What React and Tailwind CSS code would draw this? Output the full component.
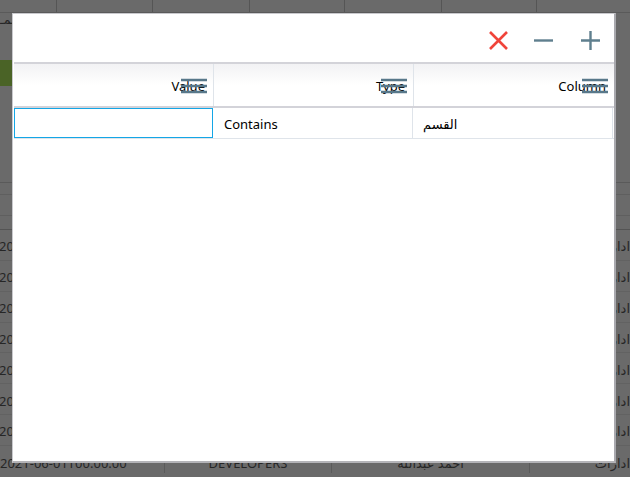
const bgRows = [0, 1, 2, 3, 4, 5, 6];

const MenuIcon = () => (
  <svg width="26" height="16" viewBox="0 0 26 16" className="absolute right-[6px] top-[14px]">
    <path d="M0 2h26M0 8h26M0 14h26" stroke="#58788a" strokeWidth="2.6" />
  </svg>
);

const HeaderCell = ({ label, last }) => (
  <div className={`relative flex h-full w-[200px] items-center justify-end pr-[8px] text-[13px] text-black ${last ? '' : 'border-r border-[#dfe4ea]'}`}>
    <span className="mt-[4px]">{label}</span>
    <MenuIcon />
  </div>
);

// dimmed data grid sitting behind the filter dialog
const BackdropGrid = () => (
  <div className="flex h-full flex-col text-[13px] text-[#262626]">
    <div className="flex h-[13px] border-b border-[#5a5a5a]">
      <div className="w-[57px] border-r border-[#555]" />
      <div className="w-[96px] border-r border-[#555]" />
      <div className="w-[97px] border-r border-[#555]" />
      <div className="w-[95px] border-r border-[#555]" />
      <div className="w-[97px] border-r border-[#555]" />
      <div className="w-[95px] border-r border-[#555]" />
    </div>
    <div className="h-[47px] leading-[12px]">لمـ</div>
    <div className="h-[26px] w-[40px] bg-[#4a6326]" />
    <div className="h-[98px] border-b border-[#5a5a5a]" />
    <div className="h-[12px] border-b border-[#5f5f5f]" />
    <div className="h-[21px] border-b border-[#5f5f5f]" />
    <div className="h-[14px] border-b border-[#545454]" />
    {bgRows.map((r) => (
      <div key={r} className="flex h-[31px] items-center justify-between border-b border-[#626262] pt-[4px]">
        <span className="-ml-[1px]">2021-06-01T00:00:00</span>
        <span>ادارات</span>
      </div>
    ))}
    <div className="flex h-[31px] items-center pt-[4px]">
      <span className="w-[165px] border-r border-[#5a5a5a]">2021-06-01T00:00:00</span>
      <span className="w-[167px] border-r border-[#5a5a5a] text-center">DEVELOPERS</span>
      <span className="w-[198px] border-r border-[#5a5a5a] text-center">احمد عبدالله</span>
      <span className="flex-1 text-right">ادارات</span>
    </div>
  </div>
);

export default function App() {
  return (
    <div className="relative h-[477px] w-[630px] overflow-hidden bg-[#6a6a6a] font-['Segoe_UI','Noto_Sans','DejaVu_Sans',sans-serif]">
      <BackdropGrid />

      <div className="absolute left-[12px] top-[13px] flex h-[450px] w-[604px] flex-col border-t border-l border-[#c9c9cd] border-r-2 border-b-2 border-r-[#a9a9ae] border-b-[#b4b4b8] bg-white">
        {/* toolbar: clear, remove row, add row */}
        <div className="flex h-[48px] shrink-0 items-center justify-end gap-[28px] pr-[14px] pt-[4px]">
          <svg width="19" height="19" viewBox="0 0 19 19" className="mr-[-2px]">
            <path d="M1 1l17 17M18 1L1 18" stroke="#f0443a" strokeWidth="2.6" />
          </svg>
          <svg width="19" height="19" viewBox="0 0 19 19">
            <path d="M0 9.5h19" stroke="#5f7f8e" strokeWidth="2.4" />
          </svg>
          <svg width="19" height="19" viewBox="0 0 19 19">
            <path d="M0 9.5h19M9.5 0v19" stroke="#5f7f8e" strokeWidth="2.4" />
          </svg>
        </div>

        {/* filter grid */}
        <div className="ml-[1px] w-[600px]">
          <div className="flex h-[46px] border-t-2 border-b-2 border-[#d3d3d9] bg-gradient-to-b from-[#f2f2f4] via-white to-white">
            <HeaderCell label="Value" />
            <HeaderCell label="Type" />
            <HeaderCell label="Column" last />
          </div>
          <div className="flex h-[31px] border-b border-[#dfe4ea] text-[13px] text-black">
            <div className="h-full w-[199px] border border-[#14a6e6]" />
            <div className="flex h-full w-[200px] items-center border-r border-[#dfe4ea] pl-[11px] pt-[4px]">Contains</div>
            <div className="flex h-full w-[200px] items-center border-r border-[#dfe4ea] pl-[10px] pt-[4px]">القسم</div>
          </div>
        </div>
      </div>
    </div>
  );
}
